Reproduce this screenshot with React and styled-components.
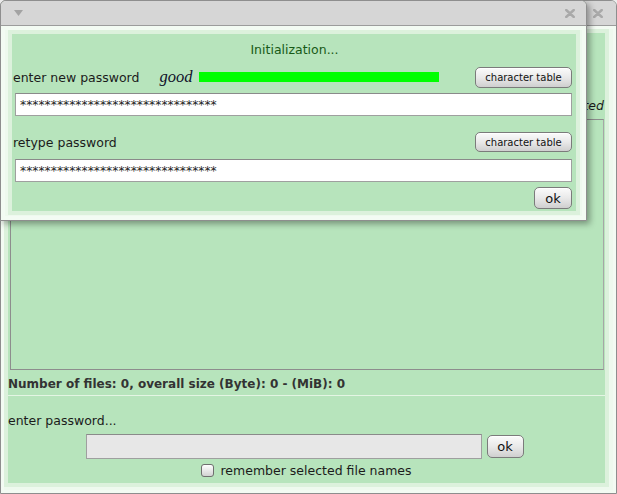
import React from 'react';
import styled, { createGlobalStyle } from 'styled-components';

const GlobalStyle = createGlobalStyle`
  html, body {
    margin: 0;
    padding: 0;
    background: #ededed;
  }
  * {
    box-sizing: border-box;
  }
`;

const FONT = '"DejaVu Sans", "Liberation Sans", sans-serif';

const Desktop = styled.div`
  position: relative;
  width: 617px;
  height: 494px;
  overflow: hidden;
  font-family: ${FONT};
  font-size: 12.5px;
  color: #1b1b1b;
`;

// ---- window chrome ----

const Window = styled.div`
  display: flex;
  flex-direction: column;
  width: ${p => p.$w}px;
  height: ${p => p.$h}px;
  border: 1px solid #8e8e8e;
  border-radius: 6px 6px 0 0;
  background: #eef9ee;
  overflow: hidden;
`;

const FloatingWindow = styled(Window)`
  position: absolute;
  left: 0;
  top: 0;
  box-shadow: 3px 3px 6px rgba(0, 0, 0, 0.35);
`;

const TitleBar = styled.div`
  flex: none;
  display: flex;
  align-items: center;
  justify-content: space-between;
  height: 25px;
  padding: 0 ${p => p.$right}px 0 13px;
  background: #d6d6d6;
  border-bottom: 1px solid #9c9c9c;
`;

const Frame = styled.div`
  flex: 1;
  display: flex;
  padding: ${p => p.$pad};
  background: #eef9ee;
  box-shadow: inset 0 0 0 ${p => p.$inner}px #f3fbf3;
`;

const Panel = styled.div`
  flex: 1;
  display: flex;
  flex-direction: column;
  background: #b7e4bc;
  box-shadow: 0 0 0 4px #dcf1dc;
  padding: ${p => p.$pad};
`;

const CloseIcon = () => (
  <svg width="10" height="9" viewBox="0 0 10 9">
    <path d="M1.2 1 L8.8 8 M8.8 1 L1.2 8" stroke="#a9a9a9" strokeWidth="2.4" strokeLinecap="round" />
  </svg>
);

const MenuArrow = () => (
  <svg width="9" height="6" viewBox="0 0 9 6">
    <path d="M0 0 H9 L4.5 6 Z" fill="#a3a3a3" />
  </svg>
);

// ---- controls ----

const Button = styled.button`
  flex: none;
  width: ${p => p.$w}px;
  height: ${p => p.$h}px;
  padding: 0;
  border: 1px solid #7b7b7b;
  border-radius: 5px;
  background: linear-gradient(#fbfbfb, #e9e9e9 50%, #cfcfcf);
  box-shadow: inset 0 1px 0 #ffffff;
  font-family: ${FONT};
  font-size: ${p => (p.$small ? '10px' : '13px')};
  color: #111;
  cursor: pointer;
`;

const TextField = styled.div`
  height: ${p => p.$h}px;
  border: 1px solid #9f9f9f;
  border-top-color: #8a8a8a;
  background: ${p => p.$bg};
  padding-left: 4px;
  display: flex;
  align-items: center;
  font-size: 12.3px;
  color: #1d1d1d;
  overflow: hidden;
  white-space: nowrap;
`;

// ---- dialog parts ----

const DialogTitle = styled.div`
  height: 30px;
  display: flex;
  align-items: center;
  justify-content: center;
  padding-left: 4px;
  color: #175a17;
`;

const FieldRow = styled.div`
  display: flex;
  align-items: center;
  height: 22px;
  margin-top: ${p => p.$mt}px;
`;

const Label = styled.span`
  white-space: nowrap;
`;

const Strength = styled.span`
  margin-left: 20px;
  font-family: "Liberation Serif", "DejaVu Serif", serif;
  font-style: italic;
  font-size: 16.5px;
  color: #10102a;
`;

const StrengthBar = styled.div`
  width: 240px;
  height: 10px;
  margin-left: 7px;
  background: #00ff00;
`;

const Spacer = styled.div`
  flex: 1;
`;

const DialogField = styled(TextField)`
  margin: ${p => p.$mt}px 0 0 2px;
`;

const ButtonRow = styled.div`
  display: flex;
  justify-content: flex-end;
  margin-top: ${p => p.$mt}px;
`;

// ---- main window parts ----

const HeaderRow = styled.div`
  height: 86px;
  display: flex;
  align-items: flex-end;
  justify-content: flex-end;
  padding-bottom: 6px;
`;

const Hint = styled.span`
  font-style: italic;
  font-size: 12.5px;
  white-space: nowrap;
  margin-right: 1px;
`;

const FileList = styled.div`
  height: 251px;
  margin: 0 1px 0 2px;
  border: 1px solid #8d8d8d;
  border-right-color: #a6a6a6;
`;

const Status = styled.div`
  height: 26px;
  display: flex;
  align-items: center;
  padding-top: 2px;
  font-weight: bold;
  font-size: 12px;
  color: #333;
  border-bottom: 1px solid #e4f5e4;
`;

const PasswordBlock = styled.div`
  display: flex;
  flex-direction: column;
  padding-top: 17px;
`;

const Centered = styled.div`
  display: flex;
  align-items: center;
  justify-content: center;
  gap: ${p => p.$gap}px;
  margin-top: ${p => p.$mt}px;
  padding-right: ${p => p.$shift}px;
`;

const Checkbox = styled.span`
  width: 13px;
  height: 13px;
  border: 1px solid #6f6f6f;
  border-radius: 3px;
  background: linear-gradient(#ffffff, #d2d2d2);
`;

const App = () => {
  const stars = '*'.repeat(32);

  return (
    <>
      <GlobalStyle />
      <Desktop>
        <Window $w={617} $h={494}>
          <TitleBar $right={13}>
            <span />
            <CloseIcon />
          </TitleBar>
          <Frame $pad="7px 11px 10px 7px" $inner={3}>
            <Panel $pad="0">
              <HeaderRow>
                <Hint>nothing selected</Hint>
              </HeaderRow>
              <FileList />
              <Status>Number of files: 0, overall size (Byte): 0 - (MiB): 0</Status>
              <PasswordBlock>
                <Label>enter password...</Label>
                <Centered $gap={5} $mt={6} $shift={4}>
                  <TextField $h={25} $bg="#e7e7e7" style={{ width: 396 }} />
                  <Button $w={37} $h={23}>ok</Button>
                </Centered>
                <Centered $gap={6} $mt={4} $shift={0}>
                  <Checkbox />
                  <Label>remember selected file names</Label>
                </Centered>
              </PasswordBlock>
            </Panel>
          </Frame>
        </Window>

        <FloatingWindow $w={587} $h={221}>
          <TitleBar $right={11}>
            <MenuArrow />
            <CloseIcon />
          </TitleBar>
          <Frame $pad="8px 10px 9px 11px" $inner={4}>
            <Panel $pad="0 4px 0 1px">
              <DialogTitle>Initialization...</DialogTitle>
              <FieldRow $mt={2}>
                <Label>enter new password</Label>
                <Strength>good</Strength>
                <StrengthBar />
                <Spacer />
                <Button $small $w={97} $h={21}>character table</Button>
              </FieldRow>
              <DialogField $h={23} $bg="#ffffff" $mt={5}>{stars}</DialogField>
              <FieldRow $mt={15}>
                <Label>retype password</Label>
                <Spacer />
                <Button $small $w={97} $h={20}>character table</Button>
              </FieldRow>
              <DialogField $h={23} $bg="#ffffff" $mt={6}>{stars}</DialogField>
              <ButtonRow $mt={5}>
                <Button $w={38} $h={22}>ok</Button>
              </ButtonRow>
            </Panel>
          </Frame>
        </FloatingWindow>
      </Desktop>
    </>
  );
};

export default App;
